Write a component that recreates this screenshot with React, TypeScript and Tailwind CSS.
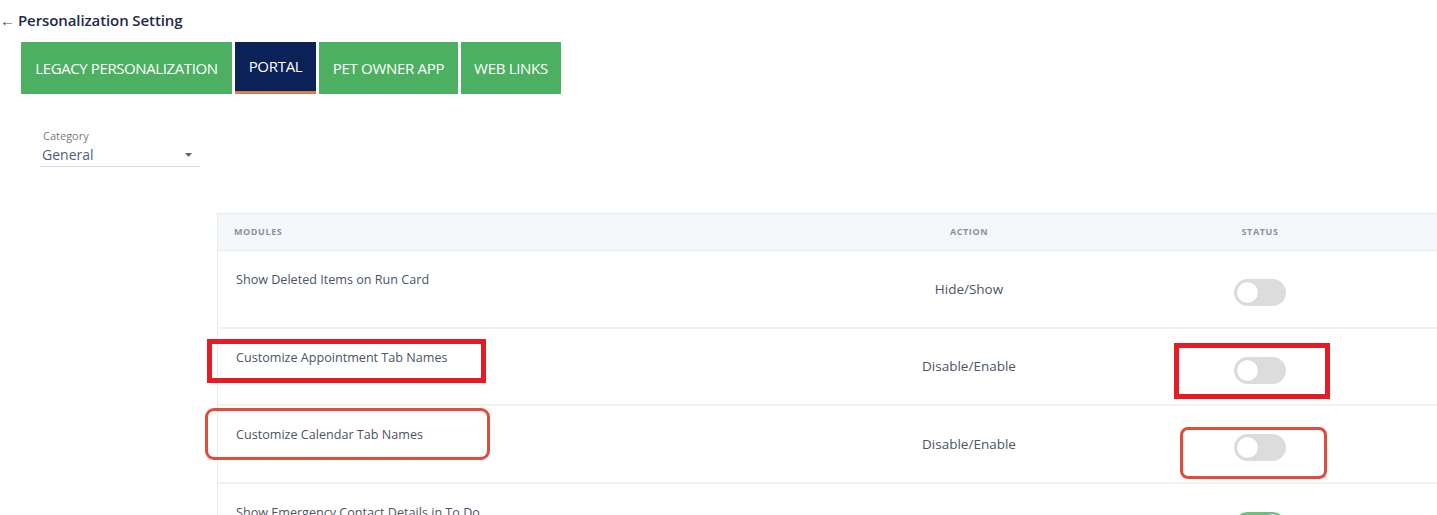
import React from "react";

function Toggle({ on = false }: { on?: boolean }) {
  return (
    <div
      className={`relative w-[52px] h-[27px] rounded-full ${on ? "bg-[#6cbf7c]" : "bg-[#dcdcdc]"}`}
    >
      <div
        className={`absolute top-[2px] ${on ? "right-[2px]" : "left-[2px]"} w-[23px] h-[23px] rounded-full bg-white border border-[#d3d3d3]`}
      />
    </div>
  );
}

const rows = [
  { name: "Show Deleted Items on Run Card", action: "Hide/Show", on: false },
  { name: "Customize Appointment Tab Names", action: "Disable/Enable", on: false },
  { name: "Customize Calendar Tab Names", action: "Disable/Enable", on: false },
  { name: "Show Emergency Contact Details in To Do", action: "", on: true },
];

export default function App() {
  return (
    <div
      className="relative w-[1437px] h-[515px] overflow-hidden bg-white"
      style={{ fontFamily: '"Open Sans", "Noto Sans", sans-serif' }}
    >
      <div className="flex items-center h-[20px] mt-[10px] text-[#1e2a4a]">
        <span className="text-[15px] leading-none w-[18px] text-[#44506a]">←</span>
        <span className="text-[15px] font-semibold tracking-[-0.1px]">Personalization Setting</span>
      </div>

      <div className="flex gap-[3px] ml-[21px] mt-[12px] h-[52px]">
        <div className="flex items-center justify-center w-[211px] bg-[#4caf62] text-white text-[15px] tracking-[-0.4px] whitespace-nowrap">
          LEGACY PERSONALIZATION
        </div>
        <div className="flex flex-col w-[81px] bg-[#0b2258]">
          <div className="flex-1 flex items-center justify-center text-white text-[15px] tracking-[-0.3px]">
            PORTAL
          </div>
          <div className="h-[3px] bg-[#d2804f]" />
        </div>
        <div className="flex items-center justify-center w-[139px] bg-[#4caf62] text-white text-[15px] tracking-[-0.3px] whitespace-nowrap">
          PET OWNER APP
        </div>
        <div className="flex items-center justify-center w-[100px] bg-[#4caf62] text-white text-[15px] tracking-[-0.3px] whitespace-nowrap">
          WEB LINKS
        </div>
      </div>

      <div className="ml-[40px] mt-[35px] w-[160px]">
        <div className="text-[11px] text-[#7b7b7b] pl-[3px] leading-[14px]">Category</div>
        <div className="flex items-center justify-between h-[24px] border-b border-[#dadada] pl-[2px] pr-[8px]">
          <span className="text-[14px] text-[#4f5e7e]">General</span>
          <svg width="7" height="4" viewBox="0 0 7 4">
            <path d="M0 0 L7 0 L3.5 4 Z" fill="#666" />
          </svg>
        </div>
      </div>

      <div className="ml-[217px] mt-[46px] border-l border-t border-[#e8ecf0]">
        <div className="grid grid-cols-[597px_308px_280px_1fr] h-[37px] items-center bg-[#f5f8fb] border-b border-[#e8ecf0] text-[9px] font-bold tracking-[0.6px] text-[#8a929c]">
          <div className="pl-[16px]">MODULES</div>
          <div className="text-center">ACTION</div>
          <div className="text-center pr-[6px]">STATUS</div>
          <div />
        </div>
        {rows.map((r) => (
          <div
            key={r.name}
            className="grid grid-cols-[597px_308px_280px_1fr] h-[77.5px] border-b-2 border-[#f1f1f1]"
          >
            <div className="pl-[18px] pt-[20px] text-[12.6px] text-[#4a5568] leading-[17px] whitespace-nowrap">{r.name}</div>
            <div className="flex items-center justify-center text-[13.5px] text-[#4a5568]">{r.action}</div>
            <div className="flex items-center justify-center pt-[8px] pr-[6px]">
              <Toggle on={r.on} />
            </div>
            <div />
          </div>
        ))}
      </div>

      {/* annotation overlays */}
      <div className="absolute left-[207px] top-[339px] w-[279px] h-[44px] border-[5px] border-[#e41d24]" />
      <div className="absolute left-[205px] top-[408px] w-[285px] h-[52px] border-[3px] border-[#e14b3b] rounded-[9px]" />
      <div className="absolute left-[1174px] top-[343px] w-[156px] h-[56px] border-[5px] border-[#e41d24]" />
      <div className="absolute left-[1180px] top-[427px] w-[147px] h-[52px] border-[3px] border-[#e14b3b] rounded-[8px]" />
    </div>
  );
}
